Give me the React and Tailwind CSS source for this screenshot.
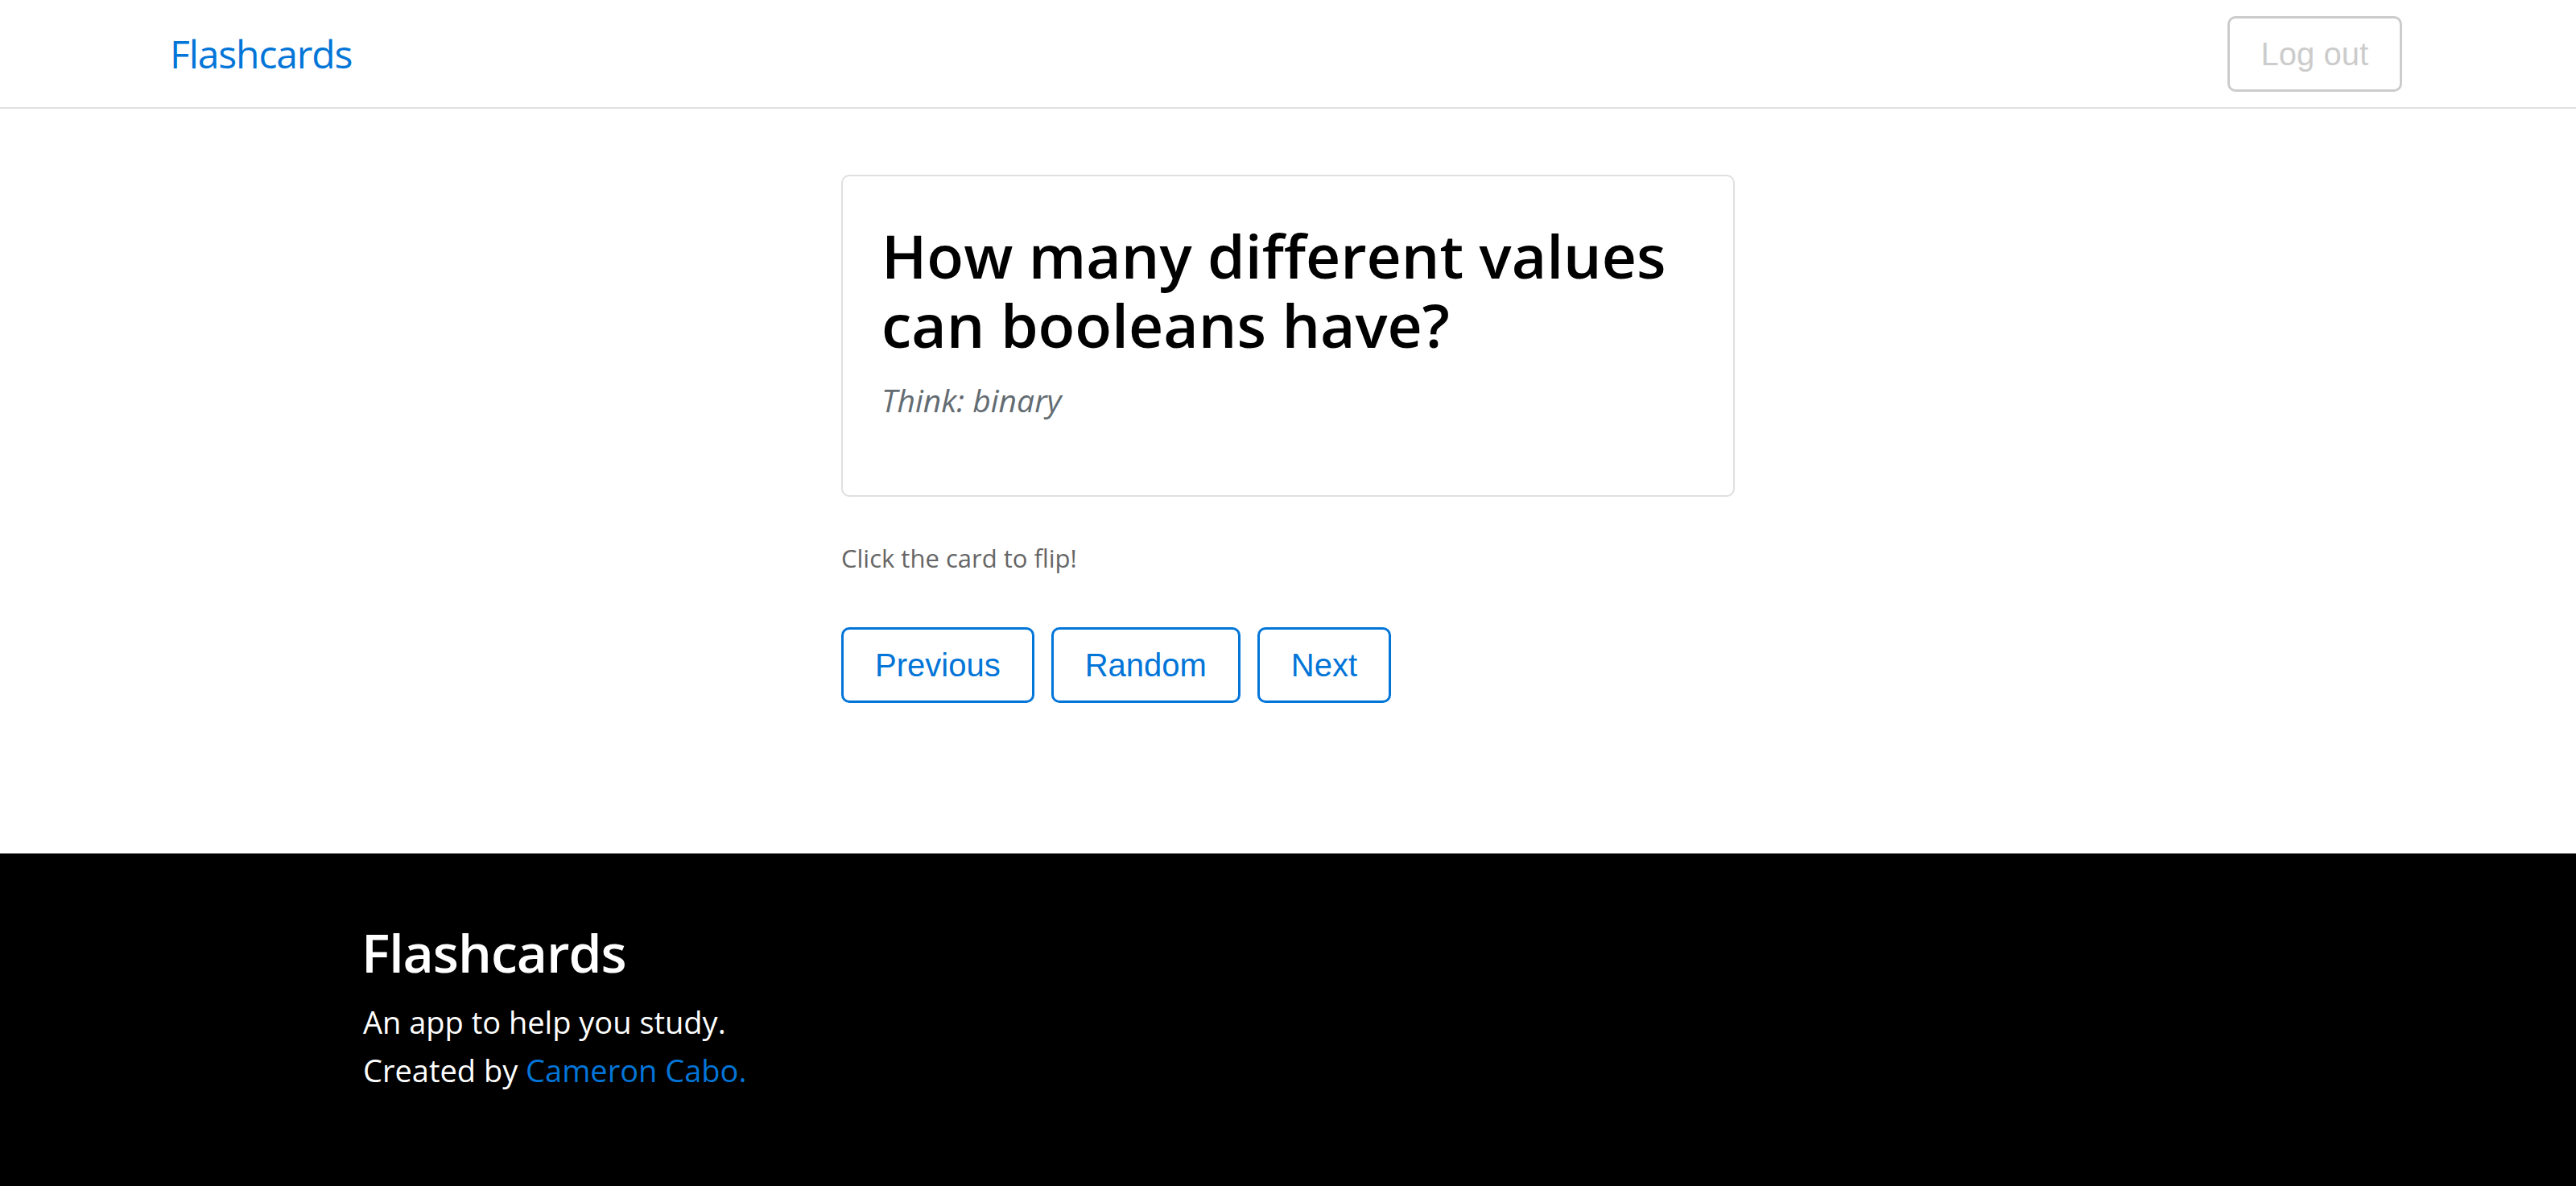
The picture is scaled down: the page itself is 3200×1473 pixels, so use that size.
import { useState } from 'react';

const cards = [
  { q: 'How many different values can booleans have?', hint: 'Think: binary', a: 'Two: true and false.' },
];

export default function App() {
  const [flipped, setFlipped] = useState(false);
  const card = cards[0];

  return (
    <div className="min-h-screen flex flex-col bg-white font-['Open_Sans',sans-serif]">
      {/* Navbar */}
      <header className="h-[135px] shrink-0 border-b-[2px] border-[#e1e1e1] flex items-center justify-between pl-[211px] pr-[216px]">
        <a href="#" className="text-[48px] tracking-[-1.1px] text-[#0275d8] leading-normal">
          Flashcards
        </a>
        <button className="h-[94px] px-[39px] border-[3px] border-[#cccccc] rounded-[10px] text-[#cccccc] text-[40px] leading-[50px] font-['Liberation_Sans',Arial,sans-serif]">
          Log out
        </button>
      </header>

      {/* Main */}
      <main className="flex-1 pt-[82px] pb-[187px]">
        <div className="w-[1110px] mx-auto">
          <div
            onClick={() => setFlipped(!flipped)}
            className="h-[400px] border-[2px] border-[#dfdfdf] rounded-[10px] pt-[55px] px-[48px] cursor-pointer"
          >
            <h1 className="text-[75px] leading-[86px] font-semibold text-black">
              {flipped ? card.a : card.q}
            </h1>
            {!flipped && (
              <p className="mt-[22px] text-[39px] leading-[58px] italic text-[#636c72]">{card.hint}</p>
            )}
          </div>

          <p className="mt-[53px] text-[31px] leading-[46px] text-[#666666]">Click the card to flip!</p>

          <div className="mt-[63px] flex gap-[21px] font-['Liberation_Sans',Arial,sans-serif]">
            {['Previous', 'Random', 'Next'].map((label) => (
              <button
                key={label}
                className="h-[94px] px-[39px] border-[3px] border-[#0275d8] rounded-[10px] text-[#0275d8] text-[40px] leading-[50px]"
              >
                {label}
              </button>
            ))}
          </div>
        </div>
      </main>

      {/* Footer */}
      <footer className="bg-black text-white pt-[83px] pb-[116px]">
        <div className="w-[2298px] mx-auto">
          <h2 className="text-[66px] leading-[79px] font-semibold tracking-[-1px] -ml-[2px]">Flashcards</h2>
          <p className="mt-[17px] text-[38px] leading-[60px]">An app to help you study.</p>
          <p className="text-[38px] leading-[60px]">
            Created by <a href="#" className="text-[#0275d8]">Cameron Cabo.</a>
          </p>
        </div>
      </footer>
    </div>
  );
}
